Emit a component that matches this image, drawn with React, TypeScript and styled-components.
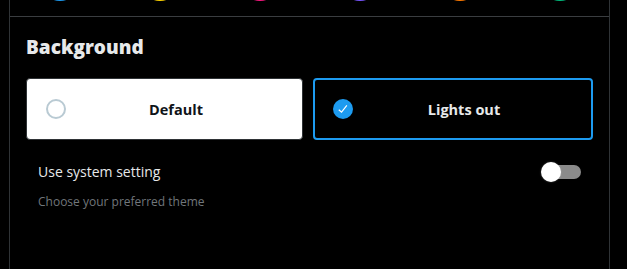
import React from "react";
import styled, { createGlobalStyle } from "styled-components";

const Global = createGlobalStyle`
  html, body { margin: 0; padding: 0; background: #000; }
  body { font-family: "Open Sans", "Noto Sans", sans-serif; }
  * { box-sizing: border-box; }
`;

const Panel = styled.div`
  margin-left: 9px;
  width: 601px;
  height: 269px;
  border-left: 1px solid #2f3336;
  border-right: 1px solid #2f3336;
  display: flex;
  flex-direction: column;
`;

const ColorRow = styled.div`
  height: 17px;
  border-bottom: 1px solid #3a3d40;
  overflow: hidden;
  display: grid;
  grid-template-columns: repeat(6, 100px);
  padding-left: 0;
`;

const ColorDot = styled.div<{ $c: string }>`
  width: 40px;
  height: 40px;
  border-radius: 50%;
  background: ${(p) => p.$c};
  margin: -39px 0 0 30px;
`;

const Heading = styled.h2`
  margin: 0;
  padding: 18px 16px 19px 16px;
  font-size: 19px;
  line-height: 24px;
  font-weight: 800;
  color: #e7e9ea;
`;

const Cards = styled.div`
  display: grid;
  grid-template-columns: 277px 280px;
  gap: 10px;
  padding: 0 15px 0 16px;
`;

const Card = styled.div<{ $light?: boolean; $selected?: boolean }>`
  height: 62px;
  border-radius: 4px;
  display: flex;
  align-items: center;
  padding: 0 16px 0 ${(p) => (p.$selected ? 18 : 19)}px;
  background: ${(p) => (p.$light ? "#fff" : "#000")};
  border: ${(p) => (p.$selected ? "2px solid #1d9bf0" : "1px solid #2f3336")};
`;

const Radio = styled.div`
  width: 20px;
  height: 20px;
  border-radius: 50%;
  border: 2px solid #b9cad3;
  flex: none;
`;

const Check = styled.div`
  width: 20px;
  height: 20px;
  border-radius: 50%;
  background: #1d9bf0;
  flex: none;
  display: flex;
  align-items: center;
  justify-content: center;
`;

const CardLabel = styled.span<{ $light?: boolean }>`
  flex: 1;
  text-align: center;
  font-size: 14.5px;
  font-weight: 700;
  color: ${(p) => (p.$light ? "#0f1419" : "#e7e9ea")};
`;

const SettingRow = styled.div`
  display: flex;
  align-items: center;
  justify-content: space-between;
  padding: 22px 28px 0 28px;
`;

const SettingLabel = styled.span`
  font-size: 14px;
  line-height: 20px;
  color: #e7e9ea;
`;

const Hint = styled.div`
  padding: 12px 28px 0;
  font-size: 12px;
  line-height: 16px;
  color: #71767b;
`;

const Toggle = styled.div`
  position: relative;
  width: 40px;
  height: 20px;
  display: flex;
  align-items: center;
  justify-content: flex-end;
`;

const Track = styled.div`
  width: 34px;
  height: 14px;
  border-radius: 7px;
  background: #8a8a8a;
`;

const Knob = styled.div`
  position: absolute;
  left: 0;
  top: 0;
  width: 20px;
  height: 20px;
  border-radius: 50%;
  background: #fff;
  box-shadow: 0 0 2px rgba(255, 255, 255, 0.3);
`;

const colors = ["#1d9bf0", "#ffd400", "#f91880", "#7856ff", "#ff7a00", "#00ba7c"];

export default function App() {
  return (
    <>
      <Global />
      <Panel>
        <ColorRow>
          {colors.map((c) => (
            <ColorDot key={c} $c={c} />
          ))}
        </ColorRow>
        <Heading>Background</Heading>
        <Cards>
          <Card $light>
            <Radio />
            <CardLabel $light>Default</CardLabel>
          </Card>
          <Card $selected>
            <Check>
              <svg width="14" height="14" viewBox="0 0 24 24">
                <path
                  d="M9.64 18.952l-5.55-4.861 1.317-1.504 3.951 3.459 8.459-10.948L19.4 6.32 9.64 18.952z"
                  fill="#fff"
                />
              </svg>
            </Check>
            <CardLabel>Lights out</CardLabel>
          </Card>
        </Cards>
        <SettingRow>
          <SettingLabel>Use system setting</SettingLabel>
          <Toggle>
            <Track />
            <Knob />
          </Toggle>
        </SettingRow>
        <Hint>Choose your preferred theme</Hint>
      </Panel>
    </>
  );
}
